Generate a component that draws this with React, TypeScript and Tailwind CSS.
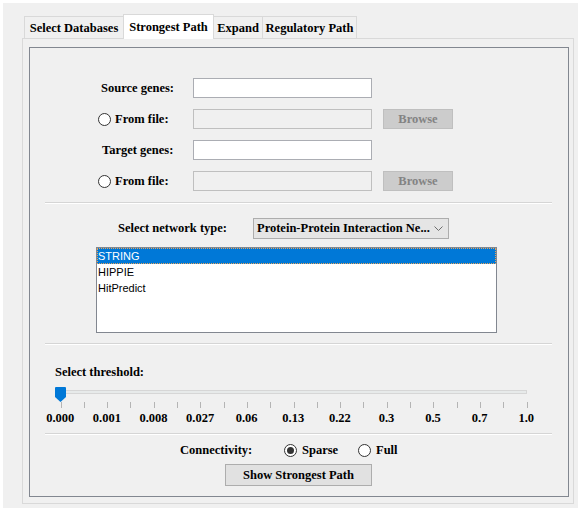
import React from "react";

const serif = "font-['Liberation_Serif','Times_New_Roman',serif] font-bold text-[12.5px] text-black";

const thresholds = ["0.000", "0.001", "0.008", "0.027", "0.06", "0.13", "0.22", "0.3", "0.5", "0.7", "1.0"];

function Radio({ checked = false }: { checked?: boolean }) {
  return (
    <span className="flex h-[13px] w-[13px] items-center justify-center rounded-full border border-[#333] bg-white">
      {checked && <span className="h-[7px] w-[7px] rounded-full bg-[#333]" />}
    </span>
  );
}

function Separator() {
  return <div className="ml-[15px] h-[2px] w-[507px] border-t border-b border-t-[#d5d5d5] border-b-white" />;
}

function Browse() {
  return (
    <div className={`ml-[11px] flex h-[20px] w-[70px] items-center justify-center border border-[#bfbfbf] bg-[#cccccc] ${serif} !text-[#838383]`}>
      Browse
    </div>
  );
}

function Tab({ label, active = false, w }: { label: string; active?: boolean; w: string }) {
  return active ? (
    <div className={`relative z-10 -mb-px -ml-px flex h-[25px] items-start justify-center border border-b-0 border-[#d9d9d9] bg-white pt-[3px] ${w} ${serif}`}>
      {label}
    </div>
  ) : (
    <div className={`-ml-px flex h-[22px] items-center justify-center border border-b-0 border-[#d9d9d9] bg-[#f0f0f0] pt-[1px] ${w} ${serif}`}>
      {label}
    </div>
  );
}

export default function App() {
  return (
    <div className="h-[508px] w-[578px] bg-white pl-[3px] pt-[3px]">
      <div className="h-[505px] w-[575px] bg-[#f0f0f0] pl-[19px] pt-[12px]">
        {/* tabs */}
        <div className="ml-[3px] flex h-[23px] items-end">
          <Tab label="Select Databases" w="w-[100px]" />
          <Tab label="Strongest Path" w="w-[91px]" active />
          <Tab label="Expand" w="w-[50px]" />
          <Tab label="Regulatory Path" w="w-[95px]" />
        </div>

        {/* tab panel */}
        <div className="h-[466px] w-[552px] border border-[#d9d9d9] bg-[#f0f0f0]">
          <div className="ml-[6px] mt-[8px] h-[450px] w-[540px] border border-[#828790] pt-[30px]">
            {/* source genes */}
            <div className="flex h-[20px] items-center">
              <div className={`w-[163px] pl-[71px] ${serif}`}>Source genes:</div>
              <div className="h-[20px] w-[179px] border border-[#abadb3] bg-white" />
            </div>
            <div className="mt-[11px] flex h-[20px] items-center">
              <div className={`flex w-[163px] items-center gap-[4px] pl-[68px] ${serif}`}>
                <Radio />
                <span>From file:</span>
              </div>
              <div className="h-[20px] w-[179px] border border-[#bfbfbf] bg-[#f0f0f0]" />
              <Browse />
            </div>
            {/* target genes */}
            <div className="mt-[11px] flex h-[20px] items-center">
              <div className={`w-[163px] pl-[72px] ${serif}`}>Target genes:</div>
              <div className="h-[20px] w-[179px] border border-[#abadb3] bg-white" />
            </div>
            <div className="mt-[11px] flex h-[20px] items-center">
              <div className={`flex w-[163px] items-center gap-[4px] pl-[68px] ${serif}`}>
                <Radio />
                <span>From file:</span>
              </div>
              <div className="h-[20px] w-[179px] border border-[#bfbfbf] bg-[#f0f0f0]" />
              <Browse />
            </div>

            <div className="mt-[11px]">
              <Separator />
            </div>

            {/* network type */}
            <div className="mt-[14px] flex h-[21px] items-center">
              <div className={`w-[223px] pl-[88px] ${serif}`}>Select network type:</div>
              <div className={`flex h-[21px] w-[196px] items-center justify-between border border-[#adadad] bg-[#e5e5e5] pl-[3px] pr-[5px] ${serif}`}>
                <span>Protein-Protein Interaction Ne...</span>
                <svg width="9" height="6" viewBox="0 0 9 6" className="mt-[1px]">
                  <path d="M0.5 0.5 L4.5 4.5 L8.5 0.5" fill="none" stroke="#6d6d6d" strokeWidth="1" />
                </svg>
              </div>
            </div>

            {/* list */}
            <div className="ml-[66px] mt-[8px] h-[86px] w-[401px] border border-[#828790] bg-white font-['Liberation_Sans',Arial,sans-serif] text-[11px] leading-[16px]">
              <div className="h-[16px] bg-[#0078d7] pl-[1px] text-white outline-1 -outline-offset-1 outline-dotted outline-[#e9a45a]">STRING</div>
              <div className="h-[16px] pl-[1px] text-black">HIPPIE</div>
              <div className="h-[16px] pl-[1px] text-black">HitPredict</div>
            </div>

            <div className="mt-[10px]">
              <Separator />
            </div>

            {/* threshold */}
            <div className={`ml-[25px] mt-[19px] leading-[16px] ${serif}`}>Select threshold:</div>
            <div className="relative ml-[20px] mt-[7px] h-[21px] w-[500px]">
              <div className="absolute left-[8px] top-[3px] h-[4px] w-[469px] border border-[#d6d6d6] bg-[#e7eaea]" />
              {Array.from({ length: 21 }).map((_, i) => (
                <div
                  key={i}
                  className="absolute top-[15px] h-[6px] w-px bg-[#b4b4b4]"
                  style={{ left: 10.5 + i * 23.3 }}
                />
              ))}
              <svg className="absolute left-[5px] top-0" width="11" height="15" viewBox="0 0 11 15">
                <path d="M0 1 Q0 0 1 0 L10 0 Q11 0 11 1 L11 10 L5.5 15 L0 10 Z" fill="#0078d7" />
              </svg>
            </div>
            <div className={`ml-[7px] mt-[2px] flex leading-[16px] ${serif}`}>
              {thresholds.map((t) => (
                <div key={t} className="w-[46.6px] shrink-0 text-center">
                  {t}
                </div>
              ))}
            </div>

            <div className="mt-[7px]">
              <Separator />
            </div>

            {/* connectivity */}
            <div className={`mt-[7px] flex h-[16px] items-center pl-[150px] ${serif}`}>
              <span className="w-[104px]">Connectivity:</span>
              <Radio checked />
              <span className="ml-[5px] w-[56px]">Sparse</span>
              <Radio />
              <span className="ml-[5px]">Full</span>
            </div>
            <div className={`ml-[195px] mt-[6px] flex h-[22px] w-[147px] items-center justify-center border border-[#adadad] bg-[#e1e1e1] ${serif}`}>
              Show Strongest Path
            </div>
          </div>
        </div>
      </div>
    </div>
  );
}
